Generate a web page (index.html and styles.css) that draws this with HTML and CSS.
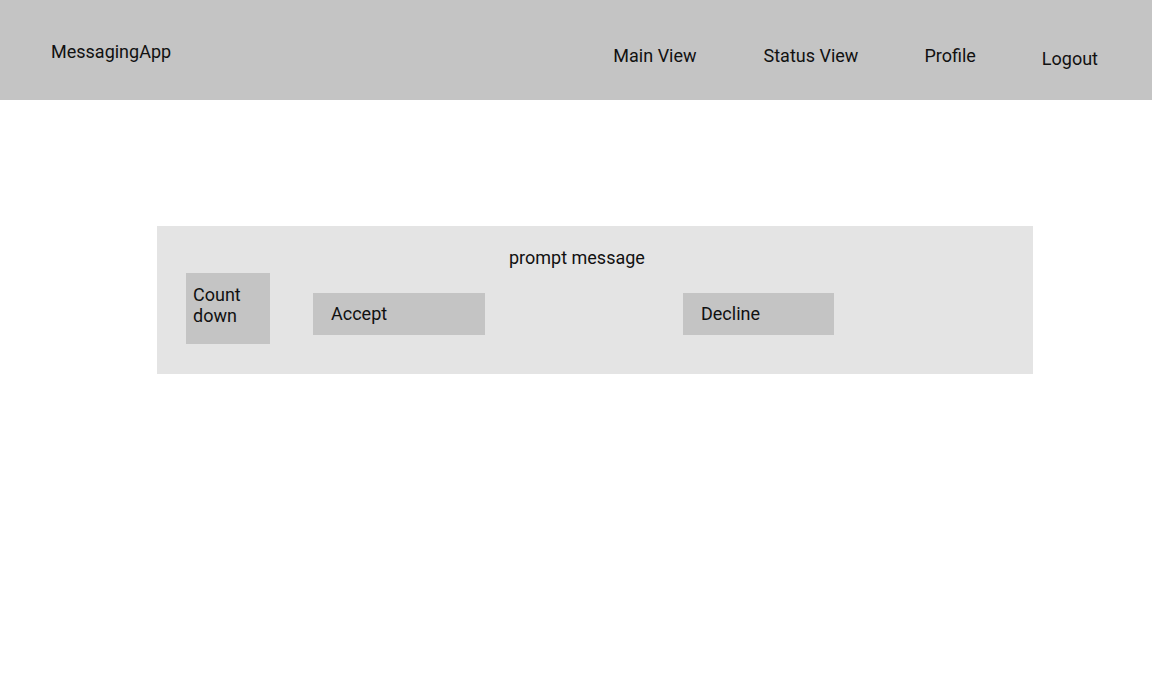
FILE: index.html
```html
<!DOCTYPE html>
<html>
<head>
<meta charset="utf-8">
<link rel="stylesheet" href="styles.css">
</head>
<body>
<header class="topbar">
  <div class="logo">MessagingApp</div>
  <nav class="nav">
    <a class="nav-item main">Main View</a>
    <a class="nav-item status">Status View</a>
    <a class="nav-item profile">Profile</a>
    <a class="nav-item logout">Logout</a>
  </nav>
</header>
<main class="content">
  <section class="prompt">
    <div class="prompt-message">prompt message</div>
    <div class="prompt-row">
      <div class="countdown">Count down</div>
      <div class="btn accept">Accept</div>
      <div class="btn decline">Decline</div>
    </div>
  </section>
</main>
</body>
</html>
```
FILE: styles.css
```css
html, body {
  margin: 0;
  padding: 0;
  background: #ffffff;
  font-family: Roboto, "Noto Sans", sans-serif;
  font-size: 18px;
  color: #111;
}
.topbar {
  height: 100px;
  background: #c4c4c4;
  display: flex;
  justify-content: space-between;
}
.logo {
  padding-left: 51px;
  padding-top: 40px;
  line-height: 24px;
}
.nav {
  display: flex;
  padding-top: 44px;
  padding-right: 54px;
}
.nav-item {
  line-height: 24px;
  display: block;
}
.status { margin-left: 67px; }
.profile { margin-left: 66px; }
.logout { margin-left: 66px; margin-top: 3px; }
.content {
  padding-top: 126px;
  padding-left: 157px;
}
.prompt {
  width: 876px;
  height: 148px;
  box-sizing: border-box;
  background: #e4e4e4;
  padding: 20px 29px 0;
}
.prompt-message {
  margin-left: 323px;
  line-height: 24px;
  height: 27px;
}
.prompt-row {
  display: flex;
  align-items: flex-start;
}
.countdown {
  width: 84px;
  height: 71px;
  box-sizing: border-box;
  background: #c4c4c4;
  padding: 11px 7px 0;
  line-height: 21px;
}
.btn {
  background: #c4c4c4;
  height: 42px;
  box-sizing: border-box;
  padding: 9px 18px 0;
  line-height: 24px;
  margin-top: 20px;
}
.accept { width: 172px; margin-left: 43px; }
.decline { width: 151px; margin-left: 198px; }
```
